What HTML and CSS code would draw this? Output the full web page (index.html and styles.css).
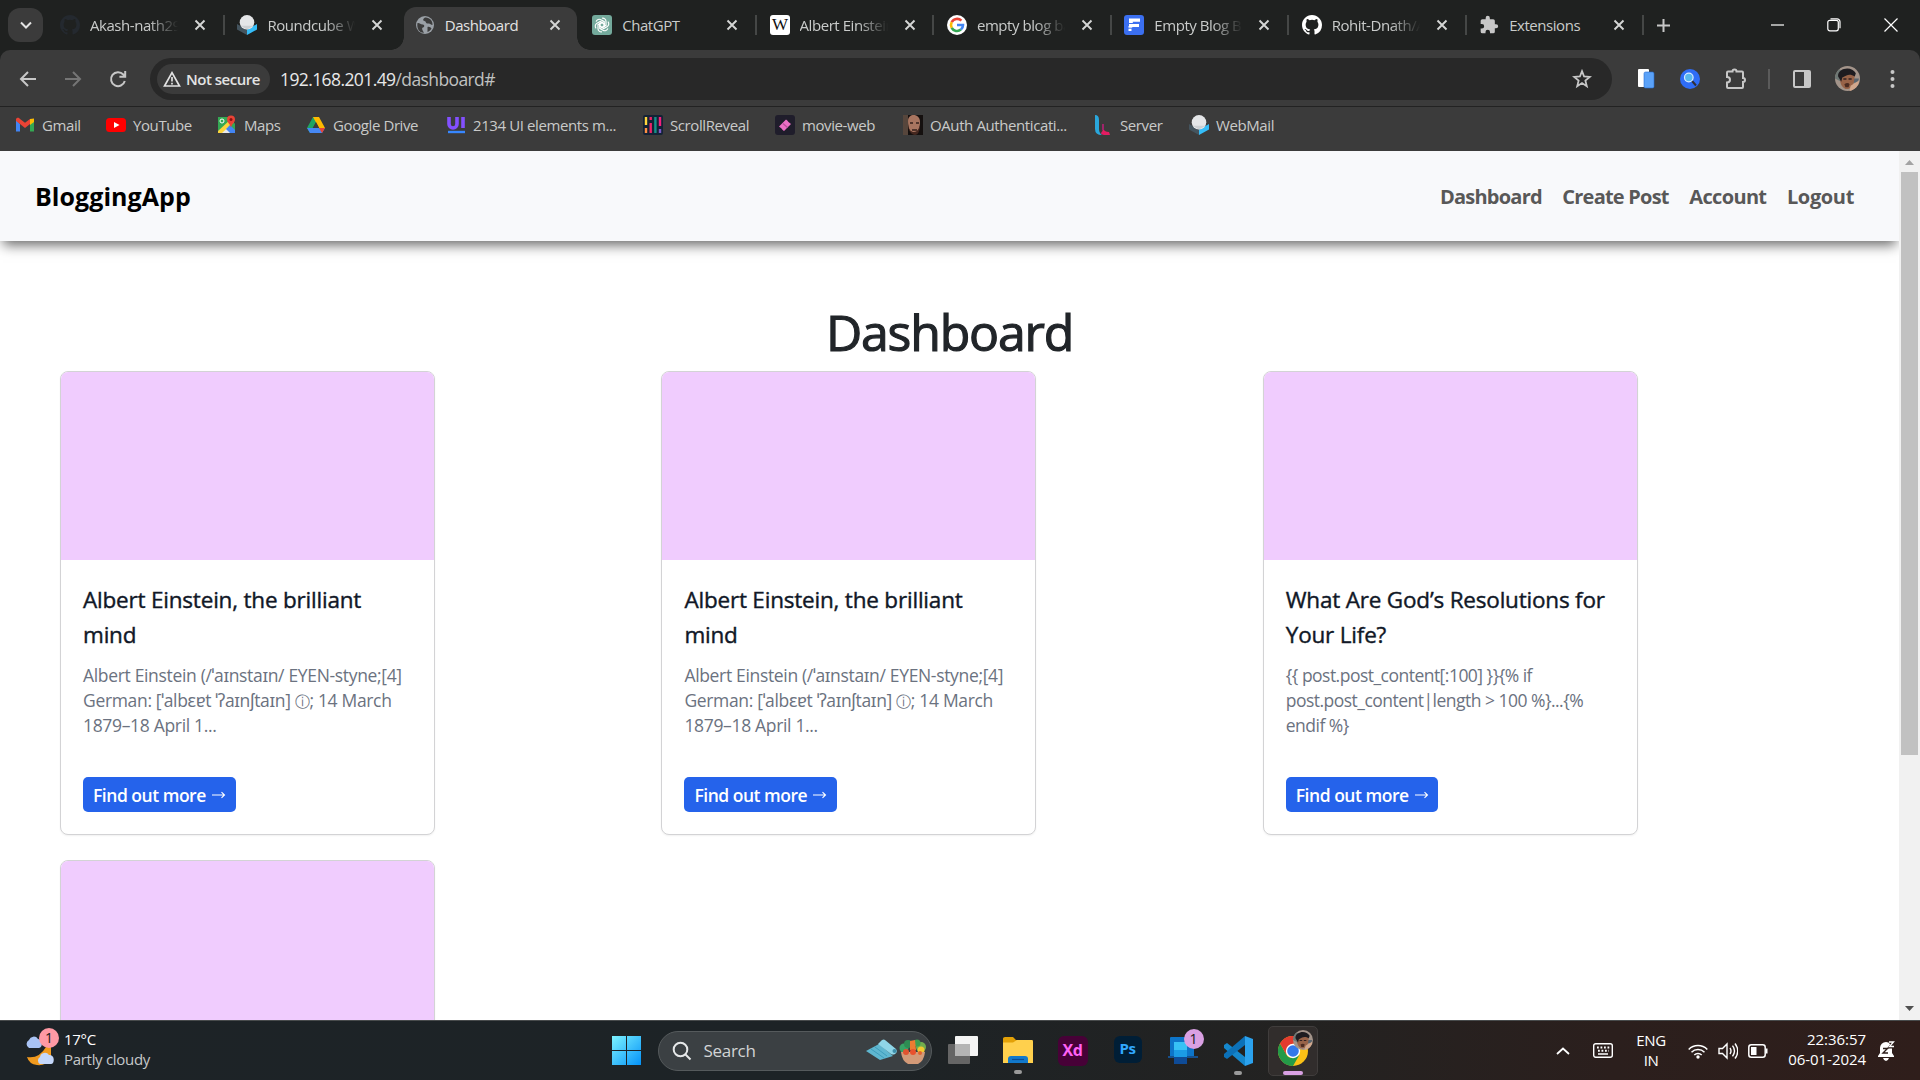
FILE: index.html
```html
<!DOCTYPE html>
<html lang="en">
<head>
<meta charset="utf-8">
<title>Dashboard</title>
<link rel="stylesheet" href="styles.css">
</head>
<body>
<svg class="defs" width="0" height="0">
  <defs>
    <symbol id="x" viewBox="0 0 12 12"><path d="M1.5 1.5l9 9M10.5 1.5l-9 9" stroke="currentColor" stroke-width="1.9"/></symbol>
    <symbol id="github" viewBox="0 0 16 16"><path fill="currentColor" d="M8 0C3.58 0 0 3.58 0 8c0 3.54 2.29 6.53 5.47 7.59.4.07.55-.17.55-.38 0-.19-.01-.82-.01-1.49-2.01.37-2.53-.49-2.69-.94-.09-.23-.48-.94-.82-1.13-.28-.15-.68-.52-.01-.53.63-.01 1.08.58 1.23.82.72 1.21 1.87.87 2.33.66.07-.52.28-.87.51-1.07-1.78-.2-3.64-.89-3.64-3.95 0-.87.31-1.59.82-2.15-.08-.2-.36-1.02.08-2.12 0 0 .67-.21 2.2.82a7.6 7.6 0 0 1 4 0c1.53-1.04 2.2-.82 2.2-.82.44 1.1.16 1.92.08 2.12.51.56.82 1.27.82 2.15 0 3.07-1.87 3.75-3.65 3.95.29.25.54.73.54 1.48 0 1.07-.01 1.93-.01 2.2 0 .21.15.46.55.38A8.01 8.01 0 0 0 16 8c0-4.42-3.58-8-8-8z"/></symbol>
    <symbol id="roundcube" viewBox="0 0 20 20"><path d="M0 9l10 5.500v5.500L0 14.500z" fill="#44545e"/><path d="M20 9l-10 5.500v5.500l10-5.500z" fill="#35bdf8"/><circle cx="10" cy="7.300" r="7.300" fill="#e4e6e8"/><path d="M3.500 10.700L10 14.500l6.500-3.800" fill="#ccd0d3"/></symbol>
    <symbol id="face" viewBox="0 0 24 24"><circle cx="12" cy="12" r="12" fill="#a3948a"/><path d="M0 12a12 12 0 0 1 4-9l5 3-3 9z" fill="#6d7774"/><path d="M17 12h6l-1 4h-5z" fill="#59646e"/><path d="M5 9c0-6 13-8 14 0l-1 7c-1 4-5 7-8 6s-5-5-5-8z" fill="#986348"/><path d="M3 10C2 2 16-1 20 7l-1 3c-3-2-6-2-8-1l-4 2-1 4z" fill="#1e1c20"/><path d="M8 12.500h3m2 0h3" stroke="#322" stroke-width="1.300"/><path d="M9 17.500c2-1.500 4-1.500 5 0l-1 3h-3z" fill="#4b2c22"/><path d="M15 19l8-5c0 5-4 9-9 10z" fill="#d2a78c"/></symbol>
  </defs>
</svg>
<div class="screen">

  <div class="tabstrip">
    <div class="tabsearch"><svg width="12" height="8" viewBox="0 0 12 8"><path d="M1 1.500l5 5 5-5" fill="none" stroke="#e3e3e3" stroke-width="2"/></svg></div>
    <div class="tabs">
      <div class="tab sep"><svg class="fav dim"><use href="#github"/></svg><span class="label fade w90">Akash-nath29</span><svg class="close"><use href="#x"/></svg></div>
      <div class="tab"><svg class="fav"><use href="#roundcube"/></svg><span class="label fade w90">Roundcube W</span><svg class="close"><use href="#x"/></svg></div>
      <div class="tab active"><svg class="fav" viewBox="0 0 20 20"><circle cx="10" cy="10" r="9" fill="#9aa0a6"/><path d="M2.500 8c2-.5 3 1.500 5 1.500S10 12 8 12.500 8 16 9 17.800C4 18 1.500 13 2.500 8zM10 2.500c-2 1-2.500 3-.5 3.500s1 3 3.500 2.500 2.500 1.500 4.500 1.500c.5-4-3-8-7.500-7.500zM12.500 12c2-.5 3 .5 4 1.500-1 2-2.500 3-4 3.500z" fill="#3c3c3c"/></svg><span class="label w90">Dashboard</span><svg class="close"><use href="#x"/></svg></div>
      <div class="tab sep"><svg class="fav" viewBox="0 0 20 20"><rect width="20" height="20" rx="3" fill="#74aa9c"/><g fill="none" stroke="#fff" stroke-width="1.150"><path id="petal" d="M10 3.200a3.300 3.300 0 0 1 4 3.300v3.800l-3.800 2.200-3.200-1.900"/><use href="#petal" transform="rotate(60 10 10)"/><use href="#petal" transform="rotate(120 10 10)"/><use href="#petal" transform="rotate(180 10 10)"/><use href="#petal" transform="rotate(240 10 10)"/><use href="#petal" transform="rotate(300 10 10)"/></g></svg><span class="label w90">ChatGPT</span><svg class="close"><use href="#x"/></svg></div>
      <div class="tab sep"><span class="fav wiki">W</span><span class="label fade w90">Albert Einstein</span><svg class="close"><use href="#x"/></svg></div>
      <div class="tab sep"><svg class="fav" viewBox="0 0 20 20"><circle cx="10" cy="10" r="10" fill="#fff"/><g fill="none" stroke-width="2.600"><path d="M14.400 5.700A6 6 0 0 0 4.700 7.200" stroke="#ea4335"/><path d="M4.700 7.200a6 6 0 0 0 0 5.600" stroke="#fbbc05"/><path d="M4.700 12.800a6 6 0 0 0 9.200 1.800" stroke="#34a853"/><path d="M10 10h6a6 6 0 0 1-2.100 4.600" stroke="#4285f4"/></g></svg><span class="label fade w90">empty blog ba</span><svg class="close"><use href="#x"/></svg></div>
      <div class="tab sep"><svg class="fav" viewBox="0 0 20 20"><rect width="20" height="20" rx="3" fill="#3b6ff0"/><path d="M5 3.500h11v3.200H8.800v2.200H15v3.200H8.800L5 15z" fill="#fff"/><path d="M4.500 11h3v5h-3z" fill="#fff"/><path d="M4 8.500h5M4 13.200h5" stroke="#3b6ff0"/></svg><span class="label fade w90">Empty Blog Ba</span><svg class="close"><use href="#x"/></svg></div>
      <div class="tab sep"><svg class="fav white"><use href="#github"/></svg><span class="label fade w90">Rohit-Dnath/A</span><svg class="close"><use href="#x"/></svg></div>
      <div class="tab sep"><svg class="fav" viewBox="0 0 24 24"><path fill="#c7c7c7" d="M20.500 11H19V7a2 2 0 0 0-2-2h-4V3.500a2.500 2.500 0 0 0-5 0V5H4a2 2 0 0 0-2 2v3.800h1.500a2.700 2.700 0 0 1 0 5.400H2V20a2 2 0 0 0 2 2h3.800v-1.500a2.700 2.700 0 0 1 5.400 0V22H17a2 2 0 0 0 2-2v-4h1.500a2.500 2.500 0 0 0 0-5z"/></svg><span class="label w90">Extensions</span><svg class="close"><use href="#x"/></svg></div>
    </div>
    <svg class="plus" width="13" height="13" viewBox="0 0 13 13"><path d="M6.500 0v13M0 6.500h13" stroke="#c7c7c7" stroke-width="2"/></svg>
    <div class="winctl">
      <svg width="14" height="14" viewBox="0 0 14 14"><path d="M1 7h13" stroke="#fff" stroke-width="1.200"/></svg>
      <svg width="14" height="14" viewBox="0 0 14 14" fill="none" stroke="#fff" stroke-width="1.200"><rect x=".8" y="2.300" width="10.500" height="10.500" rx="2"/><path d="M3.500.8H10a3 3 0 0 1 3 3v6.400"/></svg>
      <svg width="14" height="14" viewBox="0 0 14 14"><path d="M.5.5l13 13M13.500.5l-13 13" stroke="#fff" stroke-width="1.200"/></svg>
    </div>
  </div>

  <div class="toolbar">
    <div class="navbtns">
      <svg width="18" height="18" viewBox="0 0 18 18" fill="none" stroke="#c7c7c7" stroke-width="2"><path d="M17 9H2M9 2L2 9l7 7"/></svg>
      <svg width="18" height="18" viewBox="0 0 18 18" fill="none" stroke="#757575" stroke-width="2"><path d="M1 9h15M9 2l7 7-7 7"/></svg>
      <svg width="18" height="18" viewBox="0 0 18 18" fill="none" stroke="#c7c7c7" stroke-width="2"><path d="M15.800 11a7 7 0 1 1-1.500-6.500L16 6.500M16.200 1v5.800h-5.800"/></svg>
    </div>
    <div class="omnibox">
      <div class="chip"><svg width="18" height="16" viewBox="0 0 18 16" fill="none" stroke="#e3e3e3" stroke-width="1.700"><path d="M9 1.700L16.500 15h-15zM9 6v4.500M9 11.700v1.700"/></svg><span>Not secure</span></div>
      <span class="url"><b>192.168.201.49</b>/dashboard#</span>
      <svg class="star" width="20" height="20" viewBox="0 0 20 20"><path d="M10 2.200l2.100 5.300 5.700.4-4.400 3.700 1.400 5.600L10 14.100l-4.800 3.100 1.400-5.600-4.400-3.700 5.700-.4z" fill="none" stroke="#c7c7c7" stroke-width="1.800"/></svg>
    </div>
    <div class="exts">
      <svg class="e1" width="18" height="20" viewBox="0 0 18 20"><rect x="1" y="0" width="11" height="18" rx="1" fill="#fff"/><rect x="7" y="3" width="10" height="16" rx="1.500" fill="#5ba2f8" stroke="#276bd2" stroke-width=".6"/></svg>
      <svg class="e2" width="20" height="20" viewBox="0 0 20 20"><circle cx="10" cy="10" r="10" fill="#2f6df6"/><path d="M12 12l4 4.500" stroke="#322e34" stroke-width="2"/><circle cx="8.800" cy="8.500" r="4.300" fill="#58b7ed" stroke="#d8ecff" stroke-width="1.200"/></svg>
      <svg class="e3" width="22" height="22" viewBox="0 0 22 22"><path d="M7.500 3.500a2 2 0 0 1 4 0h5.500q1 0 1 1V10a2 2 0 0 1 0 4v5q0 1-1 1H3q-1 0-1-1v-4.500c4 0 4-5.500 0-5.500V4.500q0-1 1-1z" fill="none" stroke="#c7c7c7" stroke-width="2"/></svg>
      <i class="vsep"></i>
      <svg class="e4" width="18" height="18" viewBox="0 0 18 18"><rect x="1" y="1" width="16" height="16" rx="1" fill="none" stroke="#c7c7c7" stroke-width="2"/><path d="M11 1h6v16h-6z" fill="#c7c7c7"/></svg>
      <svg class="e5" width="25" height="25"><use href="#face"/></svg>
      <svg class="e6" width="5" height="18" viewBox="0 0 5 18" fill="#c7c7c7"><circle cx="2.500" cy="2" r="2"/><circle cx="2.500" cy="9" r="2"/><circle cx="2.500" cy="16" r="2"/></svg>
    </div>
  </div>

  <div class="bookmarks">
    <span class="bm b1"><svg viewBox="0 0 20 20"><path d="M1 4.500v12h4V9z" fill="#4285f4"/><path d="M19 4.500v12h-4V9z" fill="#34a853"/><path d="M15 4l4-.5V7l-4 3z" fill="#fbbc04"/><path d="M1 4c1-2 3-1.500 4 0l5 3.800L15 4v5l-5 4-5-4-4-3z" fill="#ea4335"/></svg>Gmail</span>
    <span class="bm b2"><svg viewBox="0 0 20 20"><rect y="3" width="20" height="14" rx="3.500" fill="#f00"/><path d="M8 7l5.500 3L8 13z" fill="#fff"/></svg>YouTube</span>
    <span class="bm b3"><svg viewBox="0 0 20 20"><path d="M1 2h12l5 7v9H1z" fill="#34a853"/><path d="M3 18l7-8 8 8z" fill="#e8eaed"/><path d="M1 16L14 4l3 3L5 18H1z" fill="#fbd33b"/><path d="M9 14l4-4 5 5v3h-5z" fill="#4285f4"/><circle cx="5" cy="6" r="2" fill="none" stroke="#fff"/><path d="M14 .5a4 4 0 0 1 4 4c0 3-3 4-4 8-1-4-4-5-4-8a4 4 0 0 1 4-4z" fill="#ea4335"/><circle cx="14" cy="4.500" r="1.500" fill="#811"/></svg>Maps</span>
    <span class="bm b4"><svg viewBox="0 0 20 20"><path d="M7 2h6L4 18l-3-5z" fill="#1fa463"/><path d="M7 2h6l6 11h-6z" fill="#ffba00"/><path d="M1 13h18l-3 5H4z" fill="#4688f4"/><path d="M10 7l3.200 6H6.800z" fill="#3b3b3b"/><path d="M13 13h6l-3 5z" fill="#ea4335"/></svg>Google Drive</span>
    <span class="bm b5"><svg viewBox="0 0 20 20"><path d="M3 2v7a4 4 0 0 0 8 0V2M17 2v11" fill="none" stroke="#8350ff" stroke-width="3.600"/><path d="M2 17h17" stroke="#3787ff" stroke-width="2.400"/></svg>2134 UI elements m...</span>
    <span class="bm b6"><svg viewBox="0 0 20 20"><rect width="20" height="20" rx="2" fill="#142236"/><g stroke-width="2.400"><path d="M3 2v8" stroke="#ffd63c"/><path d="M3 13v5" stroke="#ff8f42"/><path d="M7.700 2v3M7.700 8v10" stroke="#ee2369"/><path d="M12.400 2v16" stroke="#15918a"/><path d="M17 2v9" stroke="#f4207d"/><path d="M17 14v4" stroke="#785ac8"/></g></svg>ScrollReveal</span>
    <span class="bm b7"><svg viewBox="0 0 20 20"><rect width="20" height="20" rx="3" fill="#1f1d2b"/><path d="M4 11.500l7-7 1.300 1L13.500 7 16 9l-7 7-1.300-1L6.500 13.500z" fill="#ea6fc5"/><path d="M8 8.500l4.500 4" stroke="#b94d9b" stroke-width="1.300"/></svg>movie-web</span>
    <span class="bm b8"><svg viewBox="0 0 20 20"><path d="M0 0h20v20H0z" fill="#15100f"/><path d="M0 0h5v20H0z" fill="#57463c"/><path d="M5 6c0-8 12-8 12 1 0 8-3 12-6 12S5 14 5 6z" fill="#a87560"/><path d="M7 8h3m3 0h3M9 15h5" stroke="#35201b" stroke-width="1.500"/><path d="M5 10c1 5 3 7 6 7s5-3 6-7c0 6-2 10-5 10S5 16 5 10z" fill="#44271f"/></svg>OAuth Authenticati...</span>
    <span class="bm b9"><svg viewBox="0 0 20 20"><path d="M2 0q4 0 4 5v9q0 4 3 6-7 0-7-6z" fill="#2aa7dc"/><path d="M10 13q1 4 6 4l1 3h-4q-5 0-5-2 2-2 2-5z" fill="#e41c62"/><path d="M9 9h2v6H9z" fill="#a0246a"/></svg>Server</span>
    <span class="bm b10"><svg><use href="#roundcube"/></svg>WebMail</span>
  </div>

  <div class="viewport">
    <div class="page">
      <nav class="navbar">
        <a class="brand">BloggingApp</a>
        <div class="links"><a class="wide">Dashboard</a><a class="wide">Create Post</a><a>Account</a><a class="short">Logout</a></div>
      </nav>
      <h1>Dashboard</h1>
      <div class="cards">
        <article class="card"><div class="thumb"></div><div class="body"><h2>Albert Einstein, the brilliant<br>mind</h2><p>Albert Einstein (/ˈaɪnstaɪn/ EYEN-styne;[4]<br>German: [ˈalbɛɐt ˈʔaɪnʃtaɪn] <span class="info">ⓘ</span>; 14 March<br>1879–18 April 1...</p><a class="btn">Find out more <svg width="14" height="8" viewBox="0 0 14 8"><path d="M0 4h12M9.500 1.200L12.500 4l-3 2.800" fill="none" stroke="#fff" stroke-width="1.100"/></svg></a></div></article>
        <article class="card"><div class="thumb"></div><div class="body"><h2>Albert Einstein, the brilliant<br>mind</h2><p>Albert Einstein (/ˈaɪnstaɪn/ EYEN-styne;[4]<br>German: [ˈalbɛɐt ˈʔaɪnʃtaɪn] <span class="info">ⓘ</span>; 14 March<br>1879–18 April 1...</p><a class="btn">Find out more <svg width="14" height="8" viewBox="0 0 14 8"><path d="M0 4h12M9.500 1.200L12.500 4l-3 2.800" fill="none" stroke="#fff" stroke-width="1.100"/></svg></a></div></article>
        <article class="card"><div class="thumb"></div><div class="body"><h2>What Are God’s Resolutions for<br>Your Life?</h2><p class="tight">{{ post.post_content[:100] }}{% if<br>post.post_content|length &gt; 100 %}...{%<br>endif %}</p><a class="btn">Find out more <svg width="14" height="8" viewBox="0 0 14 8"><path d="M0 4h12M9.500 1.200L12.500 4l-3 2.800" fill="none" stroke="#fff" stroke-width="1.100"/></svg></a></div></article>
        <article class="card"><div class="thumb"></div></article>
      </div>
    </div>
    <div class="scrollbar">
      <svg width="9" height="5" viewBox="0 0 9 5"><path d="M0 5L4.500 0 9 5z" fill="#a3a3a3"/></svg>
      <div class="track"><div class="handle"></div></div>
      <svg width="9" height="5" viewBox="0 0 9 5"><path d="M0 0l4.500 5L9 0z" fill="#505050"/></svg>
    </div>
  </div>

  <div class="taskbar">
    <div class="weather">
      <div class="wicon"><svg width="32" height="35" viewBox="0 0 32 35"><path d="M5 17a4.500 4.500 0 0 1 0-8 5 5 0 0 1 9-1c5 0 5 9 1 9z" fill="#a9c3f4"/><path d="M3 26q12 2 19-10l5-1v14q-6 6-14 5-8-1-10-8z" fill="#f19a1e"/><path d="M16 33a4 4 0 0 1 0-7 5 5 0 0 1 9-2c6-1 6 9 2 9z" fill="#c4d7fa"/></svg><span class="badge pink">1</span></div>
      <div class="wtext"><span>17°C</span><span class="sub">Partly cloudy</span></div>
    </div>
    <svg class="win" width="29" height="29" viewBox="0 0 29 29"><defs><linearGradient id="wg" gradientUnits="userSpaceOnUse" x1="0" y1="0" x2="29" y2="29"><stop stop-color="#7df3ff"/><stop offset="1" stop-color="#0492f8"/></linearGradient></defs><path d="M0 0h14v14H0zM15 0h14v14H15zM0 15h14v14H0zM15 15h14v14H15z" fill="url(#wg)"/></svg>
    <div class="search">
      <svg width="20" height="20" viewBox="0 0 20 20" fill="none" stroke="#e6e8e9" stroke-width="2"><circle cx="8.500" cy="8.500" r="6.800"/><path d="M13.500 13.500l5 5"/></svg>
      <span>Search</span>
      <svg width="62" height="26" viewBox="0 0 62 26"><path d="M0 13l13-7 14 12-13 4z" fill="#5fb7d0"/><path d="M12 6l4-4q2-1 3 0l11 9q2 3-1 5-2 1-4 0z" fill="#8fd6e8"/><path d="M5 11l13 9M9 9l12 9" stroke="#3d9dbc"/><circle cx="28.500" cy="13" r="2" fill="#3d8eaa"/><circle cx="38" cy="10" r="4.500" fill="#38a465"/><circle cx="55" cy="9" r="5" fill="#72ae4e"/><circle cx="42" cy="6" r="4" fill="#2e8d53"/><circle cx="51" cy="5" r="3.500" fill="#3f9f50"/><path d="M44 12l0-9 5-1 1 10z" fill="#ec7c31"/><circle cx="55" cy="12" r="3.500" fill="#f2c82f"/><path d="M35 14h24q-1 9-7 12H42q-6-3-7-12z" fill="#d39a78"/><circle cx="40" cy="14" r="3" fill="#e2532f"/><circle cx="47" cy="14" r="3" fill="#e8512d"/><circle cx="54" cy="15" r="2" fill="#e2632f"/></svg>
    </div>
    <svg class="task t1" width="30" height="29" viewBox="0 0 30 29"><rect y="8" width="22" height="20" rx="1" fill="#656565"/><rect x="7" width="23" height="20" rx="1" fill="#f4f4f4"/><path d="M7 8h15v12H7z" fill="#b4b4b4"/></svg>
    <div class="app t2"><svg width="30" height="27" viewBox="0 0 30 27"><path d="M0 1.500Q0 0 2 0h8l3 3h15q2 0 2 2v4H0z" fill="#e3a107"/><path d="M0 5.500h10l4-2.500h15q1 0 1 2V26H0z" fill="#ffd04d"/><path d="M5 26v-4q0-3 3-3h14q3 0 3 3v4z" fill="#1279cb"/><path d="M9 22.500h12" stroke="#0b4c94" stroke-width="1.200"/></svg><i class="dot"></i></div>
    <div class="tile xd">Xd</div>
    <div class="tile ps">Ps</div>
    <div class="app t5"><svg width="30" height="28" viewBox="0 0 30 28"><path d="M2 1q0-1 1-1h23v19H2z" fill="#0d75c9"/><path d="M0 19h30v2H0z" fill="#15508f"/><path d="M6 5h13v22H6z" fill="#1b9be5"/><path d="M6 5h13v8H6z" fill="#36c2f6"/><path d="M6 20h13v7H6z" fill="#0e4b97"/></svg><span class="badge violet">1</span></div>
    <div class="app t6"><svg width="30" height="30" viewBox="0 0 30 30"><path d="M1 9l3-2 18 14v9L1 12z" fill="#1587cc"/><path d="M1 21l3 2L22 9V0L1 18z" fill="#0c71b8"/><path d="M22 0l8 3v24l-8 3z" fill="#2ba2ee"/></svg><i class="dot"></i></div>
    <div class="chrome"><svg width="30" height="30" viewBox="0 0 30 30"><circle cx="15" cy="15" r="15" fill="#fbc116"/><path d="M2 7.500a15 15 0 0 0 13 22.500l6.500-11.300L15 22q-5 0-6.500-3.300z" fill="#249a48"/><path d="M2 7.500A15 15 0 0 1 28 7.500H15l-6.500 11.300z" fill="#e33b2e"/><circle cx="15" cy="15" r="7.200" fill="#fff"/><circle cx="15" cy="15" r="5.800" fill="#3478ea"/></svg><svg class="mini" width="20" height="20"><use href="#face"/></svg><i class="pill"></i></div>
    <div class="tray">
      <svg class="r1" width="14" height="8" viewBox="0 0 14 8"><path d="M1 7l6-5.500L13 7" fill="none" stroke="#fff" stroke-width="1.800"/></svg>
      <svg class="r2" width="20" height="15" viewBox="0 0 20 15" fill="none" stroke="#fff"><rect x=".7" y=".7" width="18.600" height="13.600" rx="2" stroke-width="1.400"/><path d="M4 4.500h13M5 7.700h11" stroke-width="2" stroke-dasharray="1.800 1.700"/><path d="M5 11h10" stroke-width="1.500"/></svg>
      <span class="lang">ENG<br>IN</span>
      <svg class="r3" width="20" height="16" viewBox="0 0 20 16" fill="none" stroke="#fff" stroke-width="1.500"><path d="M.7 6.500a13 13 0 0 1 18.600 0M3.500 9.300a9.200 9.200 0 0 1 13 0M6.300 12a5.200 5.200 0 0 1 7.400 0"/><circle cx="10" cy="14" r="1.700" fill="#fff" stroke="none"/></svg>
      <svg class="r4" width="20" height="18" viewBox="0 0 20 18" fill="none" stroke="#fff" stroke-width="1.400"><path d="M1 6.500h3.500L9 2v14l-4.500-4.500H1zM12 6q2 3 0 6M14.500 3.700q4 5.300 0 10.600M17 1.500q5.500 7.500 0 15"/></svg>
      <svg class="r5" width="20" height="14" viewBox="0 0 20 14"><rect x=".8" y=".8" width="16.400" height="12.400" rx="2.500" fill="none" stroke="#fff" stroke-width="1.500"/><path d="M3 3h5.500v8H3zM18 4.500h1.500v5H18z" fill="#fff"/></svg>
      <span class="clock">22:36:57<br>06-01-2024</span>
      <span class="bell"><svg width="18" height="20" viewBox="0 0 18 20"><path d="M1 15l2-3V7a6 6 0 0 1 12 0v5l2 3v1H1zM6 17h6q-1 3-3 3t-3-3z" fill="#fff"/><path d="M6 7.500h4.500L6 12h5" stroke="#2d1e1b" stroke-width="1.400" fill="none"/><path d="M12.500 1.500h4L13 6h4" stroke="#2d1e1b" stroke-width="3" fill="none"/><path d="M12 1h4.500L12.500 5.500H17" stroke="#fff" stroke-width="1.300" fill="none"/></svg></span>
    </div>
  </div>
</div>
</body>
</html>
```
FILE: styles.css
```css
* { box-sizing: border-box; }
body { margin: 0; font-family: "Open Sans", "Noto Sans", "DejaVu Sans", sans-serif; }
svg { display: block; flex: none; }
.defs { position: absolute; }
.screen { width: 1920px; height: 1080px; display: flex; flex-direction: column; overflow: hidden; background: #fff; }

/* tab strip */
.tabstrip { height: 50px; flex: none; display: flex; align-items: center; background: #1f2120; }
.tabsearch { width: 35px; height: 34px; margin-left: 8px; border-radius: 12px; background: #3b3b3b; display: flex; align-items: center; justify-content: center; }
.tabs { display: flex; margin-left: 4.5px; }
.tab { width: 177.4px; height: 50px; display: flex; align-items: center; padding-left: 12.5px; position: relative; }
.tab.sep { background: linear-gradient(#454746, #454746) right center / 2px 20px no-repeat; }
.fav { width: 20px; height: 20px; margin-right: 10px; flex: none; }
.dim { color: #24292f; }
.white { color: #fff; }
.wiki { border-radius: 3px; background: #fff; color: #111; font: 17px/20px "Liberation Serif", serif; text-align: center; letter-spacing: -1px; }
.label { font-size: 15px; letter-spacing: -.45px; color: #c9cbca; white-space: nowrap; overflow: hidden; line-height: 22px; }
.w90 { width: 90px; }
.fade { -webkit-mask-image: linear-gradient(90deg, #000 65%, transparent 98%); mask-image: linear-gradient(90deg, #000 65%, transparent 98%); }
.close { width: 12px; height: 12px; margin-left: 14px; color: #d5d6d5; }
.active::before { content: ""; position: absolute; inset: 7px 3px 0 2px; border-radius: 12px 12px 0 0; background: #3b3b3b; }
.active::after { content: ""; position: absolute; left: -11px; right: -10px; bottom: 0; height: 13px; background: radial-gradient(circle at 0 0, transparent 12.5px, #3b3b3b 13px) left / 13px 13px no-repeat, radial-gradient(circle at 100% 0, transparent 12.5px, #3b3b3b 13px) right / 13px 13px no-repeat; }
.active > * { position: relative; }
.active .label { color: #e3e3e3; }
.plus { margin-left: 12.5px; }
.winctl { display: flex; gap: 43px; margin-left: auto; margin-right: 22px; }

/* toolbar */
.toolbar { height: 57px; flex: none; display: flex; align-items: center; padding-top: 1px; background: #3b3b3b; border-bottom: 1px solid #222; border-radius: 10px 10px 0 0; box-shadow: 0 -10px 0 0 #1f2120; clip-path: inset(0); }
.navbtns { display: flex; gap: 27px; margin-left: 19px; width: 131px; }
.omnibox { width: 1462px; height: 42px; border-radius: 21px; background: #282828; display: flex; align-items: center; padding-left: 7px; }
.chip { width: 113px; height: 30px; border-radius: 15px; background: #3b3b3b; display: flex; align-items: center; gap: 5px; padding-left: 6px; color: #e3e3e3; font-size: 15px; font-weight: 600; letter-spacing: -.5px; white-space: nowrap; }
.url { margin-left: 10px; color: #c0c2c1; font-size: 17.5px; letter-spacing: -.6px; }
.url b { font-weight: 400; color: #e8e8e8; }
.star { margin-left: auto; margin-right: 20px; }
.exts { display: flex; align-items: center; margin-left: 25px; }
.e2 { margin-left: 25px; }
.e3 { margin-left: 25px; }
.vsep { width: 2px; height: 20px; background: #5b5b5b; margin-left: 21px; }
.e4 { margin-left: 23px; }
.e5 { margin-left: 24px; }
.e6 { margin-left: 30px; }

/* bookmarks */
.bookmarks { height: 44px; flex: none; display: flex; padding: 0 0 8px 15px; background: #3b3b3b; color: #c9cac9; font-size: 15px; letter-spacing: -.4px; }
.bm { display: flex; align-items: center; gap: 7px; white-space: nowrap; }
.bm svg { width: 20px; height: 20px; }
.b1 { width: 91px; } .b2 { width: 111px; } .b3 { width: 89px; } .b4 { width: 140px; } .b5 { width: 197px; }
.b6 { width: 132px; } .b7 { width: 128px; } .b8 { width: 190px; } .b9 { width: 96px; }

/* page */
.viewport { height: 869px; flex: none; display: flex; overflow: hidden; }
.page { width: 1899px; height: 869px; overflow: hidden; background: #fff; }
.navbar { height: 90px; background: #f8f9fb; box-shadow: 0 7px 12px -3px rgba(0,0,0,.6); display: flex; align-items: center; justify-content: space-between; padding: 0 45px 0 35px; }
.brand { font-size: 25px; font-weight: 700; color: #000; letter-spacing: .05px; }
.links { display: flex; gap: 20.5px; font-size: 20px; font-weight: 700; letter-spacing: -.65px; color: #585858; }
.links .wide { letter-spacing: -.78px; }
.links .short { letter-spacing: -.35px; }
h1 { margin: 54px 0 0; height: 76px; line-height: 74px; font-size: 50px; font-weight: 500; letter-spacing: -1.2px; -webkit-text-stroke: 1.1px #212529; color: #212529; text-align: center; }
.cards { display: grid; grid-template-columns: repeat(3, 375px); column-gap: 226.4px; row-gap: 25px; padding-left: 60px; }
.card { height: 464px; border: 1px solid #d3d3d5; border-radius: 8px; box-shadow: 0 1px 2px rgba(0,0,0,.06); background: #fff; overflow: hidden; }
.thumb { height: 188px; background: #f0ccfe; }
.body { padding: 22px 22px; white-space: nowrap; }
h2 { margin: 0; font-size: 22.5px; line-height: 35px; font-weight: 500; letter-spacing: -.2px; -webkit-text-stroke: .4px #111827; color: #111827; }
p { margin: 11px 0 39px; font-size: 17.5px; line-height: 25px; letter-spacing: -.33px; color: #6b7280; }
p.tight { letter-spacing: -.52px; }
.info { font-size: 15px; line-height: 1; }
.btn { display: inline-flex; align-items: center; gap: 6px; width: 152.5px; height: 35px; padding-left: 10px; border-radius: 5px; background: #2563eb; color: #fff; font-size: 17.5px; font-weight: 600; letter-spacing: -.48px; }

.scrollbar { width: 21px; background: #f1f1f1; display: flex; flex-direction: column; align-items: center; padding: 9px 0; }
.track { width: 17px; flex: 1; padding-top: 7px; }
.handle { height: 583px; background: #c1c1c1; }

/* taskbar */
.taskbar { height: 60px; flex: none; display: flex; align-items: center; border-top: 1px solid #484b4c; background: linear-gradient(90deg, #1d2327 0%, #1d2326 45%, #232221 68%, #2b1f1d 84%, #2f1e1b 100%); color: #fff; }
.weather { width: 611.5px; display: flex; padding-left: 24px; }
.wicon, .app, .chrome { position: relative; }
.wicon { width: 40px; margin-top: -1px; }
.badge { position: absolute; border-radius: 50%; width: 20px; height: 20px; color: #181818; font-size: 14px; line-height: 20px; text-align: center; }
.pink { background: #ff99a4; left: 15px; top: -3px; }
.violet { background: #d9a0e3; left: 16px; top: -8px; }
.wtext { display: flex; flex-direction: column; margin-top: -3px; font-size: 15px; line-height: 20px; letter-spacing: -.3px; }
.sub { color: #c6c8c9; }
.search { width: 274px; height: 40px; margin-left: 17px; border-radius: 20px; border: 1px solid #555a5c; background: #3b4043; display: flex; align-items: center; padding-left: 13px; color: #d2d4d5; font-size: 17px; letter-spacing: -.3px; }
.search span { width: 127px; margin-left: 12px; margin-right: 35px; }
.t1 { margin-left: 16px; }
.t2 { margin-left: 25px; }
.dot { position: absolute; width: 8px; height: 4px; border-radius: 2px; background: #9a9a9a; left: 11px; bottom: -10px; }
.tile { width: 30px; height: 30px; border-radius: 6px; margin-left: 25px; text-align: center; font: 700 16px/29px "Open Sans", sans-serif; letter-spacing: -.5px; }
.xd { background: #470137; color: #ff61f6; }
.ps { background: #001e36; color: #31a8ff; width: 28px; height: 27px; line-height: 25px; margin-left: 26px; margin-top: -3px; font-size: 15px; }
.t5 { margin-left: 26px; }
.t6 { margin-left: 25px; }
.t6 .dot { bottom: -9px; }
.chrome { width: 50px; height: 50px; margin-left: 15px; border: 1px solid #403d3c; border-radius: 5px; background: #312d2c; padding: 9px; }
.mini { position: absolute; right: 4px; top: 3px; }
.pill { position: absolute; left: 14px; bottom: 0; width: 20px; height: 4px; border-radius: 2px; background: #d9a0e3; }
.tray { display: flex; align-items: center; margin-left: auto; margin-right: 25px; font-size: 15px; line-height: 20px; letter-spacing: -.4px; }
.r2 { margin-left: 23px; }
.lang { width: 44px; margin-left: 16px; margin-top: -2px; text-align: center; }
.r3 { margin-left: 15px; }
.r4 { margin-left: 10px; }
.r5 { margin-left: 10px; }
.clock { width: 84px; margin-left: 14px; margin-top: -3px; text-align: right; white-space: nowrap; letter-spacing: -.05px; }
.bell { margin-left: 11px; }
```
